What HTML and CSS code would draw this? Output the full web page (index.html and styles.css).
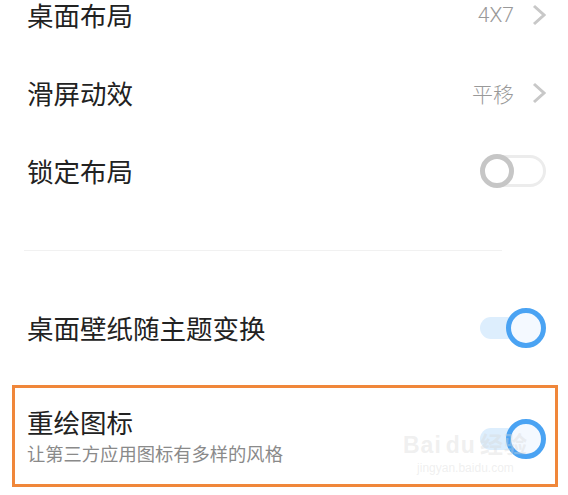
FILE: index.html
```html
<!DOCTYPE html>
<html lang="zh-CN">

<head>
    <meta charset="UTF-8">
    <title>桌面设置</title>
    <link rel="stylesheet" href="styles.css">
</head>

<body>
    <div class="settings">
        <div class="row">
            <span class="label">桌面布局</span>
            <div class="value">
                <span>4X7</span>
                <svg class="chevron" width="14" height="22" viewBox="0 0 14 22">
                    <polyline points="2,2 12,11 2,20" fill="none" stroke="#c8c8c8" stroke-width="3" />
                </svg>
            </div>
        </div>
        <div class="row">
            <span class="label">滑屏动效</span>
            <div class="value">
                <span>平移</span>
                <svg class="chevron" width="14" height="22" viewBox="0 0 14 22">
                    <polyline points="2,2 12,11 2,20" fill="none" stroke="#c8c8c8" stroke-width="3" />
                </svg>
            </div>
        </div>
        <div class="row">
            <span class="label">锁定布局</span>
            <div class="switch off"><span class="knob"></span></div>
        </div>

        <div class="divider"></div>

        <div class="row wallpaper">
            <span class="label">桌面壁纸随主题变换</span>
            <div class="switch on"><span class="knob"></span></div>
        </div>

        <div class="highlight">
            <div class="row-text">
                <span class="label">重绘图标</span>
                <span class="desc">让第三方应用图标有多样的风格</span>
            </div>
            <div class="switch on"><span class="knob"></span></div>
            <div class="watermark">
                <span class="wm-logo">Bai<b>du</b>经验</span>
                <span class="wm-url">jingyan.baidu.com</span>
            </div>
        </div>
    </div>
</body>

</html>
```

FILE: styles.css
```css
body {
    margin: 0;
    background-color: #fff;
    font-family: "Noto Sans CJK SC", "Noto Sans", sans-serif;
    color: #222;
}

.settings {
    margin-top: -24px;
}

.row {
    height: 78px;
    display: flex;
    align-items: center;
    justify-content: space-between;
    padding: 0 22px 0 27px;
}

.label {
    font-size: 26.5px;
    line-height: 1.2;
    color: #222;
}

.value {
    display: flex;
    align-items: center;
    gap: 18px;
    font-family: Roboto, "Noto Sans CJK SC", sans-serif;
    font-size: 21px;
    font-weight: 300;
    color: #999;
}

.chevron {
    display: block;
}

.divider {
    height: 1px;
    width: 478px;
    margin: 40px 0 0 24px;
    background-color: #f1f1f1;
}

.wallpaper {
    margin-top: 38px;
}

/* switches */
.switch {
    position: relative;
    width: 66px;
    height: 40px;
}

.switch .knob {
    position: absolute;
    top: 50%;
    border-radius: 50%;
    box-sizing: border-box;
}

.switch.off::before {
    content: "";
    position: absolute;
    left: 2px;
    right: 0;
    top: 4px;
    height: 32px;
    box-sizing: border-box;
    border: 3px solid #ececec;
    border-radius: 16px;
}

.switch.off .knob {
    left: 0;
    width: 34px;
    height: 34px;
    margin-top: -17px;
    border: 5px solid #c6c6c6;
    background-color: #fff;
}

.switch.on::before {
    content: "";
    position: absolute;
    left: 0;
    right: 6px;
    top: 9px;
    height: 22px;
    border-radius: 11px;
    background-color: #ddeefd;
}

.switch.on .knob {
    right: 0;
    width: 40px;
    height: 40px;
    margin-top: -20px;
    border: 5px solid #4aa3f3;
    background-color: #f4f9ff;
}

/* highlighted row */
.highlight {
    position: relative;
    margin: 18px 10px 0 12px;
    height: 102px;
    box-sizing: border-box;
    border: 3px solid #f0873a;
    display: flex;
    align-items: center;
    justify-content: space-between;
    padding: 0 9px 0 12px;
}

.row-text {
    display: flex;
    flex-direction: column;
    gap: 4px;
    margin-top: 0;
}

.desc {
    font-size: 18.3px;
    line-height: 1.3;
    color: #8a8a8a;
}

.highlight .switch {
    margin-top: 6px;
}

.watermark {
    position: absolute;
    left: 388px;
    top: 46px;
    display: flex;
    flex-direction: column;
    align-items: center;
    color: rgba(215, 215, 215, 0.4);
    font-family: "Liberation Sans", "Noto Sans CJK SC", sans-serif;
    pointer-events: none;
}

.wm-logo {
    font-size: 23px;
    font-weight: bold;
    line-height: 1;
    letter-spacing: 1px;
}

.wm-logo b {
    margin: 0 4px;
}

.wm-url {
    font-size: 12px;
    line-height: 1.2;
    margin-top: 4px;
}
```
